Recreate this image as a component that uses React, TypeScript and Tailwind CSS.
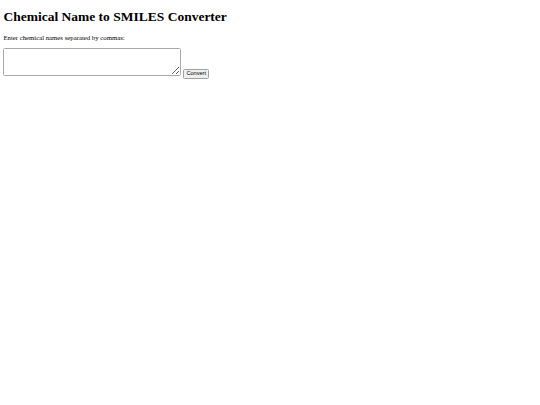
export default function App() {
  return (
    <div className="min-h-[405px] bg-white px-[3.4px] pt-px font-['Liberation_Serif',serif] text-black">
      <h1 className="mt-[8px] mb-[9px] text-[13.5px] leading-[15.5px] font-bold">
        Chemical Name to SMILES Converter
      </h1>
      <p className="mb-[6.75px] text-[6.75px] leading-[7.8px]">
        Enter chemical names separated by commas:
      </p>
      <div className="flex items-end gap-[1.5px]">
        <textarea className="h-[27.5px] w-[178px] rounded-[1.5px] border border-[#a8a8a8] bg-white" />
        <button
          type="button"
          className="mb-[-3px] h-[10px] rounded-[1.5px] border border-[#a0a0a0] bg-[#efefef] px-[2.5px] font-['Liberation_Sans',sans-serif] text-[5.6px] leading-[7px]"
        >
          Convert
        </button>
      </div>
    </div>
  );
}
